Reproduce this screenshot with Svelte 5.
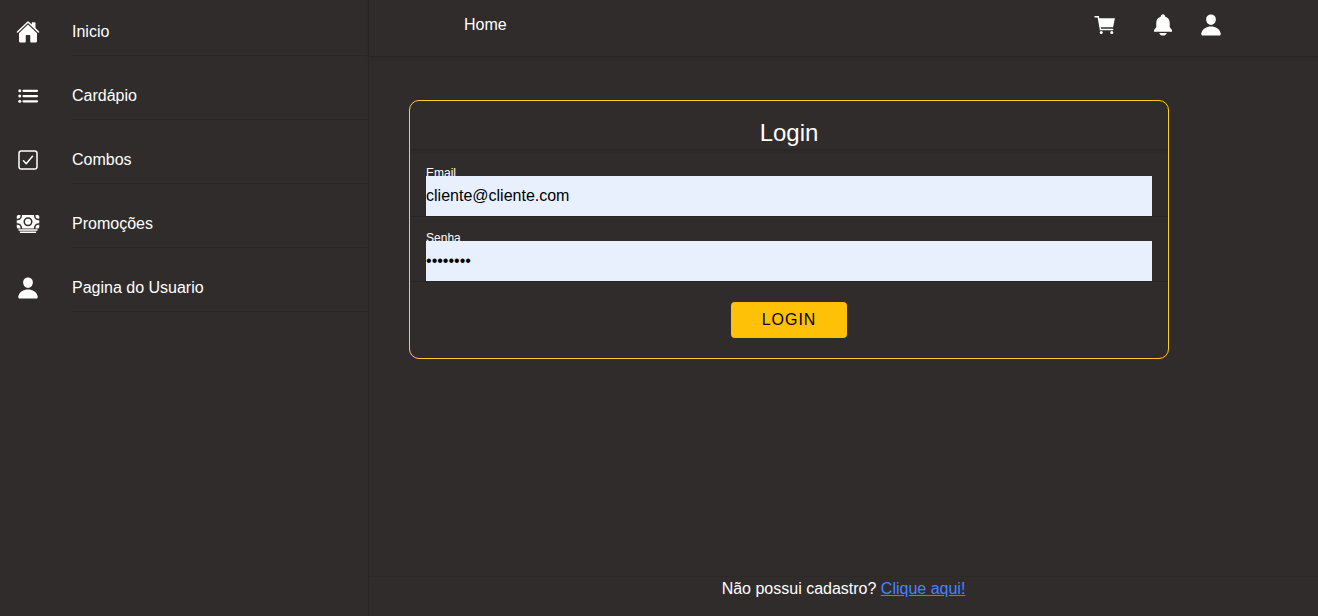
<script lang="ts">
  const menu = [
    { label: 'Inicio', icon: 'home' },
    { label: 'Cardápio', icon: 'list' },
    { label: 'Combos', icon: 'checkbox' },
    { label: 'Promoções', icon: 'cash' },
    { label: 'Pagina do Usuario', icon: 'person' },
  ];
  const actions = [
    { label: 'Carrinho', icon: 'cart' },
    { label: 'Notificações', icon: 'bell' },
    { label: 'Perfil', icon: 'person' },
  ];
  let email = $state('cliente@cliente.com');
  let senha = $state('12345678');
</script>

{#snippet glyph(name: string)}
  <svg class="icon" viewBox="0 0 512 512" aria-hidden="true">
    {#if name === 'home'}
      <path d="M261.56 101.28a8 8 0 00-11.06 0L66.4 277.15a8 8 0 00-2.47 5.79L63.9 448a32 32 0 0032 32H192a16 16 0 0016-16V328a8 8 0 018-8h80a8 8 0 018 8v136a16 16 0 0016 16h96.06a32 32 0 0032-32V282.94a8 8 0 00-2.47-5.79z" />
      <path d="M490.91 244.15l-74.8-71.56V64a16 16 0 00-16-16h-48a16 16 0 00-16 16v32l-57.92-55.38C272.77 35.14 264.71 32 256 32c-8.68 0-16.72 3.14-22.14 8.63l-212.7 203.5c-6.22 6-7 15.87-1.34 22.37A16 16 0 0043 267.56L250.5 69.28a8 8 0 0111.06 0l207.52 198.28a16 16 0 0022.59-.44c6.14-6.36 5.63-16.86-.76-22.97z" />
    {:else if name === 'list'}
      <path class="line thick" d="M160 144h288M160 256h288M160 368h288" />
      <circle cx="80" cy="144" r="32" /><circle cx="80" cy="256" r="32" /><circle cx="80" cy="368" r="32" />
    {:else if name === 'checkbox'}
      <rect class="line" x="64" y="64" width="384" height="384" rx="48" />
      <path class="line" d="M352 176L217.6 336 160 272" />
    {:else if name === 'cash'}
      <path d="M448 400H64a16 16 0 010-32h384a16 16 0 010 32zM416 448H96a16 16 0 010-32h320a16 16 0 010 32zM32 272H16v48a32 32 0 0032 32h48v-16a64.07 64.07 0 00-64-64z" />
      <path d="M480 240h16v-64h-16a96.11 96.11 0 01-96-96V64H128v16a96.11 96.11 0 01-96 96H16v64h16a96.11 96.11 0 0196 96v16h256v-16a96.11 96.11 0 0196-96zm-224 64a96 96 0 1196-96 96.11 96.11 0 01-96 96z" />
      <circle cx="256" cy="208" r="64" />
      <path d="M416 336v16h48a32 32 0 0032-32v-48h-16a64.07 64.07 0 00-64 64zM480 144h16V96a32 32 0 00-32-32h-48v16a64.07 64.07 0 0064 64zM96 80V64H48a32 32 0 00-32 32v48h16a64.07 64.07 0 0064-64z" />
    {:else if name === 'cart'}
      <circle cx="176" cy="416" r="32" /><circle cx="400" cy="416" r="32" />
      <path d="M167.78 304h261.34l38.4-192H133.89l-8.47-48H32v32h66.58l48 272H432v-32H173.42l-5.64-32z" />
    {:else if name === 'bell'}
      <path d="M176 424c10 32 40 56 80 56s70-24 80-56z" />
      <path d="M400 304v-88c0-70-29-116-94-136-6-30-24-56-50-56s-44 26-50 56c-65 20-94 66-94 136v88l-48 56v40h384v-40z" />
    {:else}
      <path d="M332.64 64.58C313.18 43.57 286 32 256 32c-30.16 0-57.43 11.5-76.8 32.38-19.58 21.11-29.12 49.8-26.88 80.78C156.76 206.28 203.27 256 256 256s99.16-49.71 103.67-110.82c2.27-30.7-7.33-59.33-27.03-80.6zM432 480H80a31 31 0 01-24.2-11.13c-6.5-7.77-9.12-18.38-7.18-29.11C57.06 392.94 83.4 353.61 124.8 326c36.78-24.51 83.37-38 131.2-38s94.42 13.5 131.2 38c41.4 27.6 67.74 66.93 76.18 113.75 1.94 10.73-.68 21.34-7.18 29.11A31 31 0 01432 480z" />
    {/if}
  </svg>
{/snippet}

<div class="app">
  <nav class="side">
    {#each menu as item}
      <a class="entry" href="#{item.icon}">
        {@render glyph(item.icon)}
        <span class="entry-label">{item.label}</span>
      </a>
    {/each}
  </nav>

  <div class="page">
    <header class="bar">
      <a class="home" href="#home">Home</a>
      <div class="actions">
        {#each actions as action}
          <button class="action {action.icon}" aria-label={action.label}>{@render glyph(action.icon)}</button>
        {/each}
      </div>
    </header>

    <main>
      <form class="card" onsubmit={(e) => e.preventDefault()}>
        <h1>Login</h1>
        <div class="field">
          <label for="email">Email</label>
          <input id="email" type="email" bind:value={email} />
        </div>
        <div class="field">
          <label for="senha">Senha</label>
          <input id="senha" type="password" bind:value={senha} />
        </div>
        <button class="submit" type="submit">LOGIN</button>
      </form>
    </main>

    <footer>Não possui cadastro? <a href="#cadastro">Clique aqui!</a></footer>
  </div>
</div>

<style>
  :global(body) {
    margin: 0;
    background: #302c2c;
  }
  .app {
    display: flex;
    min-height: 100vh;
    color: #fff;
    font: 16px/24px 'Liberation Sans', Arial, sans-serif;
  }
  .app * {
    box-sizing: border-box;
  }
  .icon {
    display: block;
    flex: none;
    width: 24px;
    height: 24px;
    fill: #fff;
  }
  .line {
    fill: none;
    stroke: #fff;
    stroke-width: 32;
    stroke-linecap: round;
    stroke-linejoin: round;
  }
  .thick {
    stroke-width: 48;
  }
  .side {
    display: flex;
    flex-direction: column;
    gap: 16px;
    flex: none;
    width: 28%;
    padding-top: 8px;
    border-right: 1px solid #282525;
  }
  .entry {
    display: flex;
    align-items: center;
    gap: 32px;
    padding-left: 16px;
    color: inherit;
    text-decoration: none;
  }
  .entry-label {
    flex: 1;
    padding: 12px 0 11px;
    border-bottom: 1px solid #282525;
  }
  .page {
    display: flex;
    flex: 1;
    flex-direction: column;
    min-width: 0;
  }
  .bar {
    display: flex;
    align-items: center;
    justify-content: space-between;
    height: 56px;
    padding: 0 10% 6px;
    box-shadow: 0 1px 3px #262323;
  }
  .home {
    color: inherit;
    text-decoration: none;
  }
  .actions {
    display: flex;
    gap: 24px;
  }
  .action {
    padding: 0;
    border: 0;
    background: none;
    cursor: pointer;
  }
  .cart {
    margin-right: 10px;
  }
  main {
    flex: 1;
    padding: 44px 40px;
  }
  .card {
    display: flex;
    flex-direction: column;
    overflow: hidden;
    width: 80vw;
    max-width: 760px;
    border: 1px solid #ffce26;
    border-radius: 10px;
  }
  h1 {
    margin: 0 0 3px;
    padding-top: 16px;
    font-size: 24px;
    line-height: 32px;
    font-weight: 400;
    text-align: center;
    box-shadow: 0 1px 3px #262323;
  }
  .field {
    padding: 12px 16px 0;
    border-bottom: 1px solid #282525;
  }
  label {
    display: block;
    height: 12px;
    font-size: 12px;
    line-height: 18px;
  }
  input {
    position: relative;
    display: block;
    width: 100%;
    height: 40px;
    padding: 0;
    border: 0;
    border-radius: 0;
    outline: 0;
    background: #e8f0fe;
    color: #000;
    font: inherit;
  }
  .submit {
    align-self: center;
    height: 36px;
    margin: 20px 0;
    padding: 0 31px;
    border: 0;
    border-radius: 4px;
    background: #ffc107;
    color: #000;
    font: inherit;
    letter-spacing: 1px;
    cursor: pointer;
  }
  footer {
    padding-bottom: 15px;
    border-top: 1px solid #2d2929;
    text-align: center;
  }
  footer a {
    color: #4286ff;
  }
</style>
